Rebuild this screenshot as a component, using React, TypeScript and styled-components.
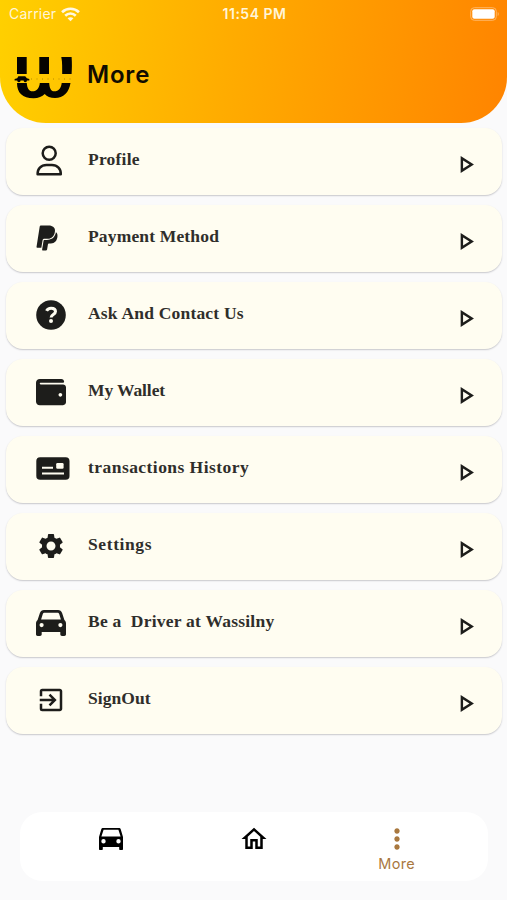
import React from 'react';
import styled, { createGlobalStyle } from 'styled-components';
import { MdExitToApp, MdMoreVert, MdOutlineHome, MdOutlinePlayArrow, MdSettings } from 'react-icons/md';
import { FaPaypal, FaWallet } from 'react-icons/fa';

const GlobalStyle = createGlobalStyle`
  * { box-sizing: border-box; }
  body { margin: 0; background: #fafafa; font-family: Inter, sans-serif; }
`;

const Screen = styled.div`
  width: 507px;
  height: 900px;
  display: flex;
  flex-direction: column;
  overflow: hidden;
  background: #fafafb;
`;

const Header = styled.header`
  height: 123px;
  flex: none;
  border-radius: 0 0 46px 46px;
  background: linear-gradient(97deg, #ffd000 0%, #ffac00 45%, #ff8400 100%);
`;

const StatusBar = styled.div`
  height: 28px;
  padding: 0 7px 0 9px;
  display: grid;
  grid-template-columns: 1fr auto 1fr;
  align-items: center;
  color: #fff5d8;
  font-size: 14px;
  line-height: 28px;
`;

const Carrier = styled.div`
  display: flex;
  align-items: center;
  gap: 5px;
  letter-spacing: 0.2px;
`;

const Clock = styled.div`
  font-size: 14px;
  font-weight: 600;
  letter-spacing: 0.5px;
`;

const Battery = styled.svg`
  justify-self: end;
  display: block;
`;

const TitleRow = styled.div`
  display: flex;
  align-items: center;
  height: 60px;
  margin-top: 20px;
  padding-left: 13px;
  gap: 14px;
`;

const Title = styled.h1`
  margin: 0 0 7px;
  font-size: 24px;
  font-weight: 600;
  line-height: 30px;
  letter-spacing: 0.8px;
  color: #110c00;
`;

const List = styled.main`
  display: flex;
  flex-direction: column;
  gap: 10px;
  padding: 5px 5px 0 6px;
`;

const Card = styled.div`
  display: flex;
  align-items: center;
  height: 67px;
  padding: 0 22px 0 30px;
  border-radius: 17px;
  background: #fffdf1;
  box-shadow: 0 1px 1.5px rgba(40, 40, 60, 0.24);
  color: #1d1d1b;
`;

const IconSlot = styled.div<{ $shift?: number }>`
  width: 52px;
  height: 42px;
  padding-bottom: 2px;
  display: flex;
  align-items: center;
  svg { display: block; flex: none; margin-left: ${p => p.$shift ?? 0}px; }
`;

const Label = styled.div<{ $spacing: number }>`
  flex: 1;
  padding-bottom: 5px;
  font-family: "Liberation Serif", serif;
  font-size: 17.5px;
  font-weight: 700;
  line-height: 22px;
  letter-spacing: ${p => p.$spacing}px;
  white-space: pre;
  color: #2f2e2b;
`;

const Arrow = styled(MdOutlinePlayArrow)`
  margin-top: 5px;
`;

const NavBar = styled.nav`
  display: grid;
  grid-template-columns: repeat(3, 1fr);
  flex: none;
  height: 69px;
  margin: auto 19px 19px 20px;
  padding: 0 20px;
  border-radius: 22px;
  background: #fff;
`;

const NavItem = styled.div<{ $active?: boolean }>`
  display: flex;
  flex-direction: column;
  align-items: center;
  padding-top: 11px;
  color: ${p => (p.$active ? '#a9783f' : '#000')};
  font-size: 14.5px;
  line-height: 20px;
  letter-spacing: 0.3px;
  svg { display: block; }
`;

const NavIcon = styled.div`
  height: 31px;
  display: flex;
  align-items: center;
`;

function Logo() {
  return (
    <svg width="60" height="46" viewBox="13 56 60 46" fill="#050300">
      <path d="M17 58h9.700v17H17zM39.300 58H49v17h-9.700zM61.300 58H71.600c.5 6 .3 12 0 17h-9.400c-.1-6 .3-11-.9-17z" />
      <path d="M17 84h9.800c.3 5 2 8.300 5.700 8.300 4.300 0 7-3.600 7.300-8.300h9.400c.3 5 1.600 8.300 5 8.300 4.500 0 7-3.600 7.500-8.300H70.500c-1.500 9.500-7 15-15.500 15-4.700 0-8-1.300-10.300-4-2.500 2.700-6.200 4.200-11.200 4.200C22.500 99.200 17 94 17 84z" />
      <path d="M14.600 80l2.600-.8 1.200-2h6.800l1.700 2 2.400.8v1.500H27a1.700 1.700 0 0 1-3.400 0h-3a1.700 1.700 0 0 1-3.400 0h-2.600z" />
      <path d="M31 80h40" fill="none" stroke="#8b6400" strokeWidth="1" strokeDasharray="1 4.500" opacity=".6" />
    </svg>
  );
}

function Wifi() {
  return (
    <svg width="19" height="15" viewBox="0 0 18 14" fill="none" stroke="#fff8e2" strokeWidth="2.500">
      <path d="M1 4.800C5.500.5 12.500.5 17 4.800M4 8.200c2.900-2.800 7.100-2.800 10 0" />
      <path d="M6.200 10.600c1.600-1.400 4-1.400 5.600 0L9 13.500z" fill="#fff8e2" stroke="none" />
    </svg>
  );
}

function PersonIcon() {
  return (
    <svg width="27" height="31" viewBox="0 0 27 31" fill="none" stroke="currentColor" strokeWidth="2.500">
      <circle cx="13.200" cy="8.300" r="6.500" />
      <path d="M1.600 29.200c-.2-5.500 3.400-9.200 8.900-9.200h5.400c5.500 0 9.100 3.700 8.900 9.200z" strokeLinejoin="round" />
    </svg>
  );
}

function QuestionIcon() {
  return (
    <svg width="30" height="30" viewBox="0 0 30 30">
      <circle cx="15" cy="15" r="14.800" fill="currentColor" />
      <path d="M10.600 10.900c.8-1.900 2.300-2.700 4.500-2.700 2.600 0 4.400 1.200 4.400 3.200 0 3.100-4.400 2.900-4.400 6" fill="none" stroke="#fffdf1" strokeWidth="3" />
      <circle cx="15" cy="21" r="2" fill="#fffdf1" />
    </svg>
  );
}

function CardIcon() {
  return (
    <svg width="34" height="23" viewBox="0 0 34 23">
      <rect x=".3" y=".3" width="33.200" height="22.400" rx="3.800" fill="currentColor" />
      <path d="M6 10.800h11M6 16.500h22" stroke="#fffdf1" strokeWidth="2" />
      <rect x="20.200" y="6" width="7.400" height="5.800" rx="1.200" fill="#fffdf1" />
    </svg>
  );
}

function CarIcon() {
  return (
    <svg width="30" height="26" viewBox="0 0 30 26" fill="currentColor">
      <path fillRule="evenodd" d="M8 0h14c2 0 3.400 1 4.100 2.900L28.400 10c1 .8 1.600 2 1.600 3.400v10.900c0 1-.7 1.700-1.700 1.700H26c-1 0-1.700-.7-1.700-1.700V22H5.700v2.300c0 1-.7 1.700-1.700 1.700H1.700C.7 26 0 25.300 0 24.300V13.400C0 12 .6 10.800 1.600 10l2.300-7.100C4.600 1 6 0 8 0zm.7 2.800c-1 0-1.600.4-1.900 1.300L5.100 9.600h19.800l-1.700-5.500c-.3-.9-.9-1.300-1.900-1.300zM5.600 13a2.100 2.100 0 1 0 0 4.200 2.100 2.100 0 0 0 0-4.200zm18.800 0a2.100 2.100 0 1 0 0 4.200 2.100 2.100 0 0 0 0-4.200z" />
    </svg>
  );
}

function TaxiIcon() {
  return (
    <svg width="26" height="22" viewBox="0 0 26 22">
      <path fillRule="evenodd" d="M5.200 0h15.600c1 0 1.700.5 2 1.400L25 9v12c0 .6-.4 1-1 1h-1.800c-.6 0-1-.4-1-1v-2H4.800v2c0 .6-.4 1-1 1H2c-.6 0-1-.4-1-1V9l2.200-7.600C3.500.5 4.200 0 5.200 0zm.4 1.700L3.400 8.600h19.200l-2.200-6.900zM5.500 11a2.200 2.200 0 1 0 0 4.400 2.200 2.200 0 0 0 0-4.400zm15 0a2.200 2.200 0 1 0 0 4.400 2.200 2.200 0 0 0 0-4.400z" />
    </svg>
  );
}

const rows = [
  { label: 'Profile', icon: <PersonIcon />, spacing: 0.22 },
  { label: 'Payment Method', icon: <FaPaypal size={28} />, spacing: 0.16, shift: -3 },
  { label: 'Ask And Contact Us', icon: <QuestionIcon />, spacing: 0.2 },
  { label: 'My Wallet', icon: <FaWallet size={30} />, spacing: -0.1 },
  { label: 'transactions History', icon: <CardIcon />, spacing: 0.45 },
  { label: 'Settings', icon: <MdSettings size={30} />, spacing: 0.6 },
  { label: 'Be a  Driver at Wassilny', icon: <CarIcon />, spacing: 0.24 },
  { label: 'SignOut', icon: <MdExitToApp size={30} />, spacing: 0.05 },
];

export default function App() {
  return (
    <>
      <GlobalStyle />
      <Screen>
        <Header>
          <StatusBar>
            <Carrier>Carrier <Wifi /></Carrier>
            <Clock>11:54 PM</Clock>
            <Battery width="30" height="14" viewBox="0 0 30 14">
              <rect x=".7" y=".7" width="25.600" height="12.600" rx="3.600" fill="none" stroke="#ffb663" />
              <rect x="2.300" y="2.300" width="22.400" height="9.400" rx="2" fill="#fff" />
              <path d="M27.700 5v4c1.400-.6 1.400-3.400 0-4z" fill="#ffb663" />
            </Battery>
          </StatusBar>
          <TitleRow>
            <Logo />
            <Title>More</Title>
          </TitleRow>
        </Header>
        <List>
          {rows.map(row => (
            <Card key={row.label}>
              <IconSlot $shift={row.shift}>{row.icon}</IconSlot>
              <Label $spacing={row.spacing}>{row.label}</Label>
              <Arrow size={29} />
            </Card>
          ))}
        </List>
        <NavBar>
          <NavItem><NavIcon><TaxiIcon /></NavIcon></NavItem>
          <NavItem><NavIcon><MdOutlineHome size={30} /></NavIcon></NavItem>
          <NavItem $active><NavIcon><MdMoreVert size={32} /></NavIcon>More</NavItem>
        </NavBar>
      </Screen>
    </>
  );
}
